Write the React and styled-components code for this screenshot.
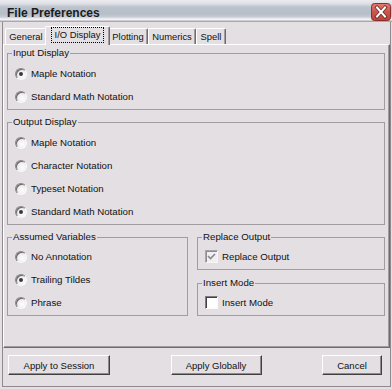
import React from "react";
import styled, { createGlobalStyle } from "styled-components";

const GlobalStyle = createGlobalStyle`
  html, body {
    margin: 0;
    padding: 0;
    background: #e3dfe3;
  }
`;

const tabs = [
  { label: "General", w: 42 },
  { label: "I/O Display", w: 61, active: true },
  { label: "Plotting", w: 40 },
  { label: "Numerics", w: 48 },
  { label: "Spell", w: 30 },
];

const App = () => {
  return (
    <>
      <GlobalStyle />
      <Window>
        <TitleBar>
          <Title>File Preferences</Title>
          <CloseButton aria-label="Close">
            <svg width="20" height="18" viewBox="0 0 20 18">
              <defs>
                <linearGradient id="cls" x1="0" y1="0" x2="0" y2="1">
                  <stop offset="0" stopColor="#e07a72" />
                  <stop offset="0.5" stopColor="#cc554e" />
                  <stop offset="1" stopColor="#b8443e" />
                </linearGradient>
              </defs>
              <rect x="0.5" y="0.5" width="19" height="17" rx="3" fill="url(#cls)" stroke="#8c2e2a" />
              <path d="M6 4.5 L14 13.5 M14 4.5 L6 13.5" stroke="#6e2420" strokeWidth="3.6" strokeLinecap="square" />
              <path d="M6 4.5 L14 13.5 M14 4.5 L6 13.5" stroke="#ffffff" strokeWidth="2" strokeLinecap="square" />
            </svg>
          </CloseButton>
        </TitleBar>
        <Client>
          <TabStrip>
            {tabs.map((t) => (
              <Tab key={t.label} $w={t.w} $active={t.active}>
                {t.active ? <Focus>{t.label}</Focus> : t.label}
              </Tab>
            ))}
          </TabStrip>
          <Panel>
            <Group $pt={3}>
              <Legend>Input Display</Legend>
              <Option><Radio $on />Maple Notation</Option>
              <Option><Radio />Standard Math Notation</Option>
            </Group>
            <Group $pt={3}>
              <Legend>Output Display</Legend>
              <Option><Radio />Maple Notation</Option>
              <Option><Radio />Character Notation</Option>
              <Option><Radio />Typeset Notation</Option>
              <Option><Radio $on />Standard Math Notation</Option>
            </Group>
            <BottomRow>
              <Group $pt={2}>
                <Legend>Assumed Variables</Legend>
                <Option><Radio />No Annotation</Option>
                <Option><Radio $on />Trailing Tildes</Option>
                <Option><Radio />Phrase</Option>
              </Group>
              <RightStack>
                <Group $pt={2}>
                  <Legend>Replace Output</Legend>
                  <Option>
                    <Check $on>
                      <svg width="9" height="9" viewBox="0 0 9 9">
                        <path d="M1 4 L3.5 6.5 L8 2" fill="none" stroke="#8a868a" strokeWidth="1.6" />
                      </svg>
                    </Check>
                    Replace Output
                  </Option>
                </Group>
                <Group $pt={2}>
                  <Legend>Insert Mode</Legend>
                  <Option><Check />Insert Mode</Option>
                </Group>
              </RightStack>
            </BottomRow>
          </Panel>
          <ButtonBar>
            <Button $w={102}>Apply to Session</Button>
            <Button $w={91}>Apply Globally</Button>
            <Button $w={60}>Cancel</Button>
          </ButtonBar>
        </Client>
      </Window>
    </>
  );
};

export default App;

const Window = styled.div`
  width: 392px;
  height: 389px;
  display: flex;
  flex-direction: column;
  background: #e3dfe3;
  font-family: "Liberation Sans", Arial, sans-serif;
  font-size: 9.7px;
  color: #111;
  overflow: hidden;
`;

const TitleBar = styled.div`
  box-sizing: border-box;
  height: 22px;
  flex: none;
  display: flex;
  align-items: flex-start;
  justify-content: space-between;
  padding: 0 1px 0 7px;
  background: linear-gradient(
    #ececf0 0px,
    #dcdfe4 4px,
    #bcc3cc 7px,
    #b6bec8 14px,
    #c8cdd5 17px,
    #f3f3f5 19px,
    #f3f3f5 20px,
    #aaa8ae 21px,
    #aaa8ae 22px
  );
`;

const Title = styled.div`
  margin-top: 6px;
  font-size: 12px;
  line-height: 14px;
  font-weight: bold;
  color: #1c1c1c;
`;

const CloseButton = styled.button`
  margin-top: 3px;
  width: 20px;
  height: 18px;
  padding: 0;
  border: 0;
  background: none;
  display: block;
  svg {
    display: block;
  }
`;

const Client = styled.div`
  flex: 1;
  display: flex;
  flex-direction: column;
  margin: 0 1px 2px 2px;
  padding-top: 4px;
  border: 1px solid #8e8a8e;
  border-top: 0;
  min-height: 0;
`;

const TabStrip = styled.div`
  height: 18px;
  flex: none;
  display: flex;
  align-items: flex-end;
  padding-left: 2px;
`;

const Tab = styled.div`
  box-sizing: border-box;
  width: ${(p) => (p.$active ? p.$w + 4 : p.$w)}px;
  height: ${(p) => (p.$active ? 19 : 16)}px;
  margin: 0 ${(p) => (p.$active ? -2 : 0)}px ${(p) => (p.$active ? -1 : 0)}px;
  padding-bottom: ${(p) => (p.$active ? 2 : 0)}px;
  position: relative;
  z-index: ${(p) => (p.$active ? 2 : 1)};
  display: flex;
  align-items: center;
  justify-content: center;
  background: #e3dfe3;
  border-top: 1px solid #fff;
  border-left: 1px solid #fff;
  border-right: 1px solid #6e6a6e;
  border-radius: 2px 2px 0 0;
  box-shadow: inset -1px 0 0 #a09ca0;
  font-size: 9.4px;
  line-height: 12px;
  white-space: nowrap;
`;

const Focus = styled.span`
  outline: 1px dotted #000;
  padding: 1px 3px;
  line-height: 12px;
`;

const Panel = styled.div`
  flex: 1;
  box-sizing: border-box;
  min-height: 0;
  display: flex;
  flex-direction: column;
  gap: 6px;
  padding: 2px 4px 0 3px;
  border-top: 1px solid #fff;
  border-left: 1px solid #fff;
  border-right: 1px solid #6e6a6e;
  border-bottom: 1px solid #6e6a6e;
  box-shadow: inset -1px -1px 0 #a09ca0;
`;

const Group = styled.fieldset`
  margin: 0;
  min-width: 0;
  border: 1px solid #a09ca0;
  padding: ${(p) => p.$pt}px 7px 1px 7px;
`;

const Legend = styled.legend`
  padding: 0 1px;
  margin-left: -3px;
  line-height: 12px;
`;

const Option = styled.label`
  display: flex;
  align-items: center;
  gap: 4px;
  height: 23px;
  line-height: 12px;
  white-space: nowrap;
`;

const Radio = styled.span`
  box-sizing: border-box;
  flex: none;
  width: 12px;
  height: 12px;
  border-radius: 50%;
  border: 1px solid;
  border-color: #8a868a #fafafa #fafafa #8a868a;
  background: radial-gradient(circle at 62% 62%, #ffffff 0%, #eeecee 55%, #d2ced2 100%);
  box-shadow: inset 1px 1px 0 #6a666a;
  display: flex;
  align-items: center;
  justify-content: center;
  &::after {
    content: "";
    width: 4px;
    height: 4px;
    border-radius: 50%;
    background: ${(p) => (p.$on ? "#3c383c" : "transparent")};
  }
`;

const Check = styled.span`
  box-sizing: border-box;
  flex: none;
  width: 13px;
  height: 13px;
  border: 1px solid;
  border-color: ${(p) =>
    p.$on ? "#a8a4a8 #f6f6f6 #f6f6f6 #a8a4a8" : "#7e7a7e #fafafa #fafafa #7e7a7e"};
  box-shadow: inset 1px 1px 0 ${(p) => (p.$on ? "#8e8a8e" : "#444044")};
  background: ${(p) => (p.$on ? "#f1eff1" : "#ffffff")};
  display: flex;
  align-items: center;
  justify-content: center;
  svg {
    display: block;
  }
`;

const BottomRow = styled.div`
  display: grid;
  grid-template-columns: 181px 1fr;
  gap: 9px;
`;

const RightStack = styled.div`
  display: flex;
  flex-direction: column;
  justify-content: space-between;
`;

const ButtonBar = styled.div`
  flex: none;
  display: flex;
  justify-content: space-between;
  align-items: flex-start;
  padding: 7px 8px 11px 5px;
`;

const Button = styled.button`
  box-sizing: border-box;
  width: ${(p) => p.$w}px;
  height: 20px;
  padding: 0;
  background: #e3dfe3;
  border: 1px solid;
  border-color: #fff #404040 #404040 #fff;
  box-shadow: inset -1px -1px 0 #8e8a8e;
  font-family: "Liberation Sans", Arial, sans-serif;
  font-size: 9.5px;
  color: #111;
`;
